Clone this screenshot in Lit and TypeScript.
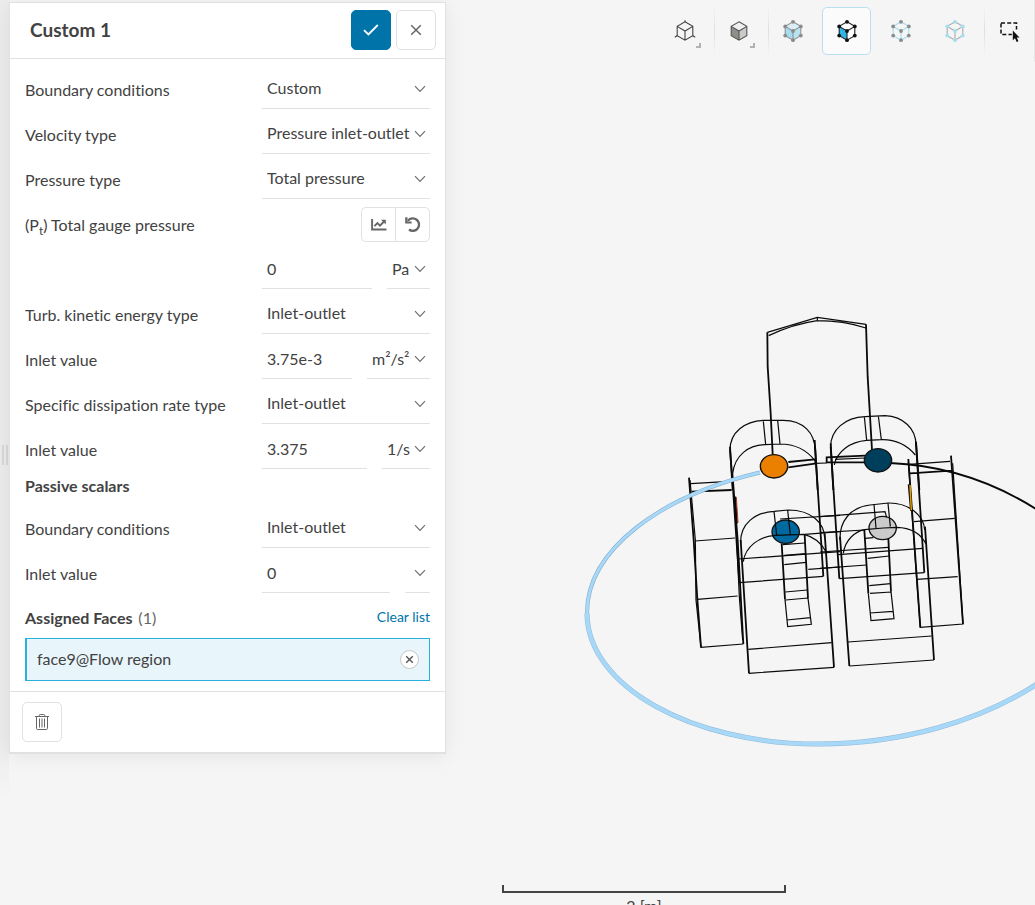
import { LitElement, html, svg, css, nothing } from "lit";
import { customElement, property } from "lit/decorators.js";
import { classMap } from "lit/directives/class-map.js";

type Unit = string | null;

interface SelectRow {
  kind: "select";
  id: string;
  label: string;
  value: string;
}
interface ValueRow {
  kind: "value";
  id: string;
  label: string;
  value: string;
  unit: Unit;
}
type Row = SelectRow | ValueRow;

const chevron = html`<svg class="chevron" width="12" height="8" viewBox="0 0 12 8" aria-hidden="true">
  <path d="M1 1.2 6 6.4 11 1.2" fill="none" stroke="#6e6e6e" stroke-width="1.2" />
</svg>`;

/* One labelled line of the form: either a drop-down or a number with its unit. */
@customElement("form-row")
export class FormRow extends LitElement {
  @property({ attribute: false }) row!: Row;

  static styles = css`
    :host {
      display: block;
    }
    .row {
      display: flex;
      justify-content: space-between;
      height: 45px;
    }
    .label {
      padding-top: 14px;
      line-height: 24px;
      white-space: nowrap;
    }
    .controls {
      display: flex;
      gap: 15px;
      width: 168px;
      padding-top: 5px;
      box-sizing: border-box;
    }
    .drop {
      display: grid;
      align-items: center;
      border-bottom: 1px solid #e1e1e1;
    }
    .wide {
      flex: 1;
      min-width: 0;
    }
    .chevron {
      grid-area: 1 / 1;
      justify-self: end;
      margin-right: 4px;
      pointer-events: none;
    }
    select,
    input {
      font: inherit;
      font-variant-ligatures: inherit;
      color: inherit;
      appearance: none;
      background: none;
      border: 0;
      border-radius: 0;
      margin: 0;
      outline: none;
      height: 100%;
      min-width: 0;
      box-sizing: border-box;
    }
    select {
      grid-area: 1 / 1;
      width: 100%;
      padding: 0 20px 0 5px;
    }
    .wide select {
      padding-bottom: 2px;
    }
    input {
      flex: 1;
      width: 0;
      padding: 0 5px;
      border-bottom: 1px solid #e1e1e1;
    }
  `;

  render() {
    const r = this.row;
    return html`<div class="row">
      <label class="label" for=${r.id}>${r.label}</label>
      <div class="controls">
        ${r.kind === "select"
          ? html`<div class="drop wide">
              <select id=${r.id}><option>${r.value}</option></select>${chevron}
            </div>`
          : html`<input id=${r.id} .value=${r.value} />
              <div class="drop">
                <select aria-label="Unit"><option>${r.unit}</option></select>${chevron}
              </div>`}
      </div>
    </div>`;
  }
}

const flowRows: Row[] = [
  { kind: "select", id: "bc", label: "Boundary conditions", value: "Custom" },
  { kind: "select", id: "vel", label: "Velocity type", value: "Pressure inlet-outlet velocity" },
  { kind: "select", id: "pres", label: "Pressure type", value: "Total pressure" },
];
const turbulenceRows: Row[] = [
  { kind: "value", id: "pt", label: "", value: "0", unit: "Pa" },
  { kind: "select", id: "tke", label: "Turb. kinetic energy type", value: "Inlet-outlet" },
  { kind: "value", id: "tke-value", label: "Inlet value", value: "3.75e-3", unit: "m²/s²" },
  { kind: "select", id: "sdr", label: "Specific dissipation rate type", value: "Inlet-outlet" },
  { kind: "value", id: "sdr-value", label: "Inlet value", value: "3.375", unit: "1/s" },
];
const scalarRows: Row[] = [
  { kind: "select", id: "ps", label: "Boundary conditions", value: "Inlet-outlet" },
  { kind: "value", id: "ps-value", label: "Inlet value", value: "0", unit: "" },
];

const toRow = (row: Row) => html`<form-row .row=${row}></form-row>`;

@customElement("condition-panel")
export class ConditionPanel extends LitElement {
  static styles = css`
    :host {
      display: block;
      background: #fff;
      border: 1px solid #e1e1e1;
      border-bottom-width: 2px;
      box-shadow: 0 2px 20px rgba(0, 0, 0, 0.07);
    }
    header {
      display: flex;
      align-items: center;
      gap: 5px;
      padding: 7px 9px 8px 20px;
      border-bottom: 1px solid #e1e1e1;
    }
    h1 {
      flex: 1;
      margin: 0;
      font-size: 19px;
      line-height: 24px;
      font-weight: 700;
    }
    h2 {
      margin: 0;
      font-size: 16px;
      line-height: 24px;
      font-weight: 700;
    }
    button {
      display: grid;
      place-items: center;
      box-sizing: border-box;
      padding: 0;
      background: #fff;
      border: 1px solid #e1e1e1;
      border-radius: 5px;
    }
    .square {
      width: 40px;
      height: 40px;
    }
    .confirm {
      background: #0074a8;
      border-color: #0074a8;
    }
    .body {
      padding: 5px 15px 10px;
    }
    .gauge {
      display: flex;
      justify-content: space-between;
      height: 45px;
    }
    .gauge-label {
      padding-top: 14px;
      line-height: 24px;
    }
    sub {
      font-size: 12px;
      line-height: 0;
    }
    .pair {
      display: flex;
      padding-top: 8px;
    }
    .pair button {
      height: 35px;
    }
    .pair .first {
      width: 34px;
      border-radius: 5px 0 0 5px;
      border-right: 0;
    }
    .pair .second {
      width: 35px;
      border-radius: 0 5px 5px 0;
    }
    .scalars {
      padding: 5px 0;
    }
    .assigned {
      display: flex;
      justify-content: space-between;
      align-items: center;
      height: 45px;
      padding: 6px 0 1px;
      box-sizing: border-box;
    }
    .count {
      font-weight: 400;
      color: #666;
      margin-left: 2px;
    }
    a {
      color: #0074a8;
      font-size: 14px;
      line-height: 24px;
      padding-bottom: 2px;
      text-decoration: none;
    }
    .face {
      display: flex;
      align-items: center;
      justify-content: space-between;
      height: 43px;
      box-sizing: border-box;
      padding: 0 10px;
      border: 1px solid #28b1dc;
      border-left-width: 2px;
      background: #e8f5fb;
    }
    .face span {
      line-height: 24px;
      padding-bottom: 2px;
    }
    .face button {
      width: 19px;
      height: 19px;
      border-radius: 50%;
      border-color: #c6c6c6;
    }
    footer {
      padding: 10px 12px;
      border-top: 1px solid #e1e1e1;
    }
  `;

  render() {
    return html`
      <header>
        <h1>Custom 1</h1>
        <button class="square confirm" aria-label="Confirm">
          <svg width="16" height="12" viewBox="0 0 16 12">
            <path d="M1 6.2 5.4 10.4 14.8 1" fill="none" stroke="#fff" stroke-width="1.8" />
          </svg>
        </button>
        <button class="square" aria-label="Close">
          <svg width="12" height="12" viewBox="0 0 12 12">
            <path d="M1.2 1.2 10.8 10.8M10.8 1.2 1.2 10.8" stroke="#666" stroke-width="1.5" />
          </svg>
        </button>
      </header>
      <div class="body">
        ${flowRows.map(toRow)}
        <div class="gauge">
          <span class="gauge-label">(P<sub>t</sub>) Total gauge pressure</span>
          <div class="pair">
            <button class="first" aria-label="Plot">
              <svg width="16" height="14" viewBox="0 0 16 14">
                <path d="M1.1 1V11.5H15.5" fill="none" stroke="#666" stroke-width="1.9" />
                <path d="M3.4 8.1 6.4 5.1 9 7.7 13 3.5" fill="none" stroke="#666" stroke-width="1.9" />
                <path d="M10 1.7H14.8V6.5Z" fill="#666" />
              </svg>
            </button>
            <button class="second" aria-label="Reset">
              <svg width="18" height="18" viewBox="0 0 18 18">
                <path d="M4 4.7A6.2 6.2 0 1 1 5 13.5" fill="none" stroke="#666" stroke-width="2.3" />
                <path d="M1.2 1.3V7.6H7.6V5.4H3.5V1.3Z" fill="#666" />
              </svg>
            </button>
          </div>
        </div>
        ${turbulenceRows.map(toRow)}
        <h2 class="scalars">Passive scalars</h2>
        ${scalarRows.map(toRow)}
        <div class="assigned">
          <h2>Assigned Faces <span class="count">(1)</span></h2>
          <a href="#">Clear list</a>
        </div>
        <div class="face">
          <span>face9@Flow region</span>
          <button aria-label="Remove face">
            <svg width="9" height="9" viewBox="0 0 9 9">
              <path d="M1.2 1.2 7.8 7.8M7.8 1.2 1.2 7.8" stroke="#555" stroke-width="1.4" />
            </svg>
          </button>
        </div>
      </div>
      <footer>
        <button class="square" aria-label="Delete">
          <svg width="14" height="18" viewBox="0 0 14 18" fill="none" stroke="#666">
            <path d="M0 3.5H14M4.2 3.4V2.6Q4.2 1.5 5.4 1.5H8.6Q9.8 1.5 9.8 2.6V3.4" />
            <path d="M1.5 3.5V15.4Q1.5 16.5 2.6 16.5H11.4Q12.5 16.5 12.5 15.4V3.5" />
            <path d="M4.5 5.5V14.5M7 5.5V14.5M9.5 5.5V14.5" />
          </svg>
        </button>
      </footer>
    `;
  }
}

const vertices = [
  [12, 2.8],
  [19.8, 7.4],
  [19.8, 16.6],
  [12, 21.2],
  [4.2, 16.6],
  [4.2, 7.4],
  [12, 12],
];

/* Cube glyph with its own tint for faces, edges and corner points. */
const cube = (top: string, left: string, right: string, edge: string, dot: string | null) => svg`
  <path d="M12 2.8 19.8 7.4 12 12 4.2 7.4Z" fill=${top} />
  <path d="M4.2 7.4 12 12V21.2L4.2 16.6Z" fill=${left} />
  <path d="M19.8 7.4 12 12V21.2L19.8 16.6Z" fill=${right} />
  <path d="M12 2.8 19.8 7.4V16.6L12 21.2 4.2 16.6V7.4ZM4.2 7.4 12 12 19.8 7.4M12 12V21.2"
    fill="none" stroke=${edge} stroke-width="1.1" />
  ${dot ? vertices.map(([x, y]) => svg`<circle cx=${x} cy=${y} r="1.9" fill=${dot} />`) : nothing}
`;

const tools = [
  {
    name: "View orientation",
    menu: true,
    art: svg`${cube("none", "none", "none", "#444", null)}
      <path d="M12 3V1.2M4.4 16.5 1.8 18.2M19.6 16.5 22.2 18.2" stroke="#444" stroke-width="1.1" />`,
  },
  { name: "Render mode", menu: true, sep: true, art: cube("#efefef", "#8f8f8a", "#c9cbc9", "#555", null) },
  { name: "Select volumes", sep: true, art: cube("#d9eef5", "#a5dcee", "#b9e2ef", "#8d9497", "#8b8b8b") },
  { name: "Select faces", active: true, art: cube("#fff", "#2fb4e6", "#fff", "#222", "#111") },
  { name: "Select edges", art: cube("none", "none", "none", "#9edcf0", "#8b8b8b") },
  { name: "Select points", art: cube("none", "none", "none", "#a9a9a9", "#a5dff1") },
  {
    name: "Box select",
    sep: true,
    art: svg`<path d="M4 4H19.5V15.5H4Z" fill="none" stroke="#111" stroke-width="1.5" stroke-dasharray="4 2.2" />
      <path d="M14.8 10.5H21.5V18H14.8Z" fill="#f5f5f5" />
      <path d="M15.8 11.6V21.2L18 19.3 19.7 23 21.4 22.2 19.8 18.6H22.6Z" fill="#111" />`,
  },
];

@customElement("view-toolbar")
export class ViewToolbar extends LitElement {
  static styles = css`
    :host {
      display: flex;
      justify-content: flex-end;
      gap: 5px;
      padding: 7px 1px 7px 0;
      border-right: 1px solid #e6e6e6;
    }
    .tool {
      display: flex;
    }
    .rule {
      width: 1px;
      background: linear-gradient(transparent, #dedede, transparent);
    }
    button {
      display: grid;
      place-items: center;
      position: relative;
      box-sizing: border-box;
      width: 49px;
      height: 48px;
      padding: 0;
      background: none;
      border: 1px solid transparent;
      border-radius: 5px;
    }
    .narrow {
      width: 48px;
    }
    .active {
      background: #fbfbfb;
      border-color: #b9e0ee;
    }
    .menu {
      position: absolute;
      right: 7px;
      bottom: 6px;
      width: 3px;
      height: 3px;
      border: solid #b2b2b2;
      border-width: 0 2px 2px 0;
    }
  `;

  render() {
    return tools.map(
      (t) => html`<div class="tool">
        ${t.sep ? html`<span class="rule"></span>` : nothing}
        <button class=${classMap({ active: !!t.active, narrow: !!t.sep })} aria-label=${t.name}>
          <svg width="24" height="24" viewBox="0 0 24 24">${t.art}</svg>
          ${t.menu ? html`<span class="menu"></span>` : nothing}
        </button>
      </div>`
    );
  }
}

@customElement("model-view")
export class ModelView extends LitElement {
  static styles = css`
    :host {
      display: block;
      min-height: 0;
      overflow: hidden;
    }
    .scene {
      display: block;
      width: 100%;
      height: 100%;
      overflow: visible;
    }
    .scene path {
      fill: none;
      stroke: #0a0a0a;
      vector-effect: non-scaling-stroke;
    }
    .scene .thin {
      stroke-width: 1.2px;
    }
    .scene .bold {
      stroke-width: 1.8px;
    }
    .scene .red {
      stroke: #b23a22;
      stroke-width: 1px;
    }
    .scene .amber {
      stroke: #e0a000;
      stroke-width: 1.5px;
    }
    .scene .rim {
      stroke: #8fb8d6;
      stroke-width: 5px;
    }
    .scene .ring {
      stroke: #a8d8f8;
      stroke-width: 4px;
    }
    .scene .rim-far {
      stroke: #7fa9c9;
      stroke-width: 4px;
    }
    .scene .ring-far {
      stroke: #a8d8f8;
      stroke-width: 3px;
    }
    ellipse {
      stroke: #111;
      stroke-width: 4;
    }
    .orange {
      fill: #eb7f00;
    }
    .navy {
      fill: #003f5c;
    }
    .blue {
      fill: #00699f;
    }
    .grey {
      fill: #cbcbcb;
    }
  `;

  render() {
    const far = "M760 472.5C660 496 587 550 587 613";
    const near = "M587 613C587 686 691 744 818 744C900 744 980 722 1040 682";
    return html`<svg class="scene" viewBox="446 62 589 823" preserveAspectRatio="xMinYMin meet" role="img" aria-label="Flow region model">
      <path class="bold" d="M890 463C940 465 990 480 1036 509" />
      <g transform="translate(680 440) scale(.33333)">
        <ellipse class="blue" cx="317" cy="275" rx="41" ry="35" />
        <path class="bold" d="M27 113 41 300 52 478 63 622M150 30 158 130 178 428M157 100 173 300 190 612M404 0 430 409M182 300 207 700M434 280 462 682M305 310 315 478M374 285 384 475M35 155 155 150" />
        <path class="thin" d="M30 120 46 300 48 480 63 622 190 612M170 300 178 470 188 600M32 131 150 124M45 303 165 294M52 478 173 468M178 428 430 409M207 700 462 682M205 628 455 608M175 357 480 335M300 237 480 226M374 283 480 275M385 388 480 381" />
        <path class="thin" d="M182 310C180 250 225 218 282 214L325 210C395 210 434 250 434 295M190 365C195 320 240 288 285 286L372 283C400 290 422 305 438 335M282 214 290 285M323 211 331 283" />
        <path class="thin" d="M315 478 323 560 394 553 384 475M308 314 375 309M313 346 377 341M313 374 378 367M316 456 382 450M317 480 384 474M320 540 392 533" />
        <path class="bold" d="M166 170 171 250" />
        <path class="red" d="M169 172 174 248" />
      </g>
      <g transform="translate(820 430) scale(.33333)">
        <ellipse class="grey" cx="188" cy="294" rx="41" ry="35" />
        <path class="bold" d="M32 50 58 446M288 40 313 428M60 320 88 708M315 290 342 690M133 300 145 490M205 325 213 485M265 87 301 592M393 77 429 582M270 130 395 122" />
        <path class="thin" d="M58 446 313 428M88 708 342 690M84 636 335 618M0 260 195 245 200 262M0 308 133 300M0 366 205 352M55 374 308 355M0 415 140 405" />
        <path class="thin" d="M60 330C58 275 90 232 150 225L205 219C265 218 312 255 314 300M70 370C75 330 105 305 133 299L190 294 230 292C270 293 302 310 318 342M162 223 168 294M204 220 211 290" />
        <path class="thin" d="M145 490 153 572 222 566 213 485M135 325 160 323M143 385 208 378M148 467 212 461M150 490 214 486M150 549 219 544" />
        <path class="thin" d="M265 95 290 448 301 592 429 582 398 100M268 103 390 94M282 275 404 265M290 448 413 440" />
        <path class="bold" d="M266 163 273 243" />
        <path class="amber" d="M270 165 274 241" />
      </g>
      <g transform="translate(720 300) scale(.33333)">
        <path class="thin" d="M142 97 292 52 438 73M146 107Q220 72 292 62 370 62 438 84M292 52V62" />
        <path class="bold" d="M142 97 143 200 152 340 158 462M438 73 443 230 456 450M30 440 38 570M285 440 293 570M332 430 340 570M588 425 598 570" />
        <path class="thin" d="M30 450C30 395 75 364 130 361H190C250 361 285 400 285 450M38 520C45 465 85 436 135 434L180 432C225 432 260 450 285 482M130 364 137 434M173 361 180 432" />
        <path class="thin" d="M332 440C332 390 375 352 435 350L495 347C550 350 588 385 588 435M343 495C350 455 390 425 440 421L485 419C530 418 565 440 586 465M433 350 440 421M475 348 484 419" />
        <path class="bold" d="M205 486 285 478M205 502 290 490M435 487H320V472L435 467" />
        <path class="thin" d="M285 478V490L320 489M345 478 435 474" />
      </g>
      <path class="rim-far" d=${far} />
      <path class="ring-far" d=${far} />
      <path class="rim" d=${near} />
      <path class="ring" d=${near} />
      <g transform="translate(720 300) scale(.33333)">
        <ellipse class="orange" cx="162" cy="499" rx="41" ry="35" />
        <ellipse class="navy" cx="474" cy="481" rx="41" ry="35" />
      </g>
    </svg>`;
  }
}

@customElement("app-root")
export class AppRoot extends LitElement {
  static styles = css`
    :host {
      display: flex;
      height: 100vh;
      overflow: hidden;
      background: #f5f5f5;
      color: #424242;
      font-family: Lato, "Open Sans", sans-serif;
      font-size: 16px;
      font-variant-ligatures: none;
    }
    .rail {
      display: flex;
      align-items: center;
      justify-content: center;
      gap: 2px;
      width: 9px;
      padding-top: 5px;
      box-sizing: border-box;
      background: linear-gradient(to bottom, #ececec 740px, #f5f5f5 800px);
    }
    .grip {
      width: 2px;
      height: 20px;
      background: #d8d8d8;
    }
    condition-panel {
      width: 437px;
      box-sizing: border-box;
      flex: none;
      align-self: flex-start;
      margin-top: 2px;
    }
    .stage {
      flex: 1;
      min-width: 0;
      display: flex;
      flex-direction: column;
    }
    model-view {
      flex: 1;
    }
    .scale {
      height: 20px;
      width: 284px;
      margin-left: 56px;
      text-align: center;
      line-height: 26px;
      color: #444;
    }
    .bar {
      height: 6px;
      border: 2px solid #444;
      border-top: 0;
    }
  `;

  render() {
    return html`
      <div class="rail"><span class="grip"></span><span class="grip"></span></div>
      <condition-panel></condition-panel>
      <main class="stage">
        <view-toolbar></view-toolbar>
        <model-view></model-view>
        <div class="scale">
          <div class="bar"></div>
          2 [m]
        </div>
      </main>
    `;
  }
}
